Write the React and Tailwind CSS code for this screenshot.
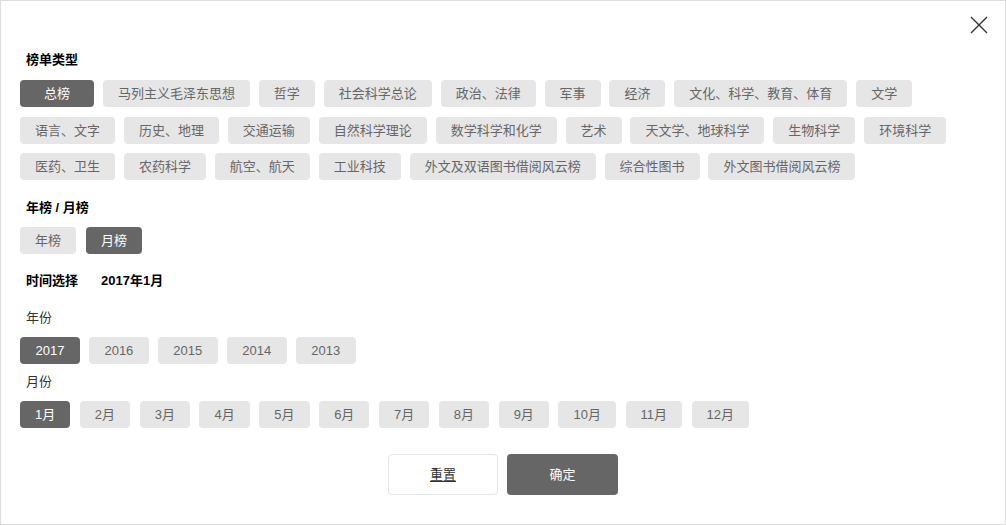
import React, { useState } from 'react';

const FONT = { fontFamily: '"Liberation Sans", "Noto Sans CJK SC", sans-serif' };

const categories = [
  '总榜', '马列主义毛泽东思想', '哲学', '社会科学总论', '政治、法律', '军事', '经济',
  '文化、科学、教育、体育', '文学', '语言、文字', '历史、地理', '交通运输', '自然科学理论',
  '数学科学和化学', '艺术', '天文学、地球科学', '生物科学', '环境科学', '医药、卫生',
  '农药科学', '航空、航天', '工业科技', '外文及双语图书借阅风云榜', '综合性图书', '外文图书借阅风云榜',
];
const years = ['2017', '2016', '2015', '2014', '2013'];
const months = ['1月', '2月', '3月', '4月', '5月', '6月', '7月', '8月', '9月', '10月', '11月', '12月'];

const Chip = ({ label, active, pad = 'px-[15px]', onClick }) => (
  <button
    onClick={onClick}
    className={`h-[27px] leading-[27px] rounded-[4px] text-[13px] whitespace-nowrap ${pad} ${
      active ? 'bg-[#666666] text-white' : 'bg-[#e6e6e6] text-[#666666]'
    }`}
  >
    {label}
  </button>
);

const Heading = ({ children, className = '' }) => (
  <div className={`ml-[6px] h-[20px] leading-[20px] text-[13px] font-bold text-black ${className}`}>{children}</div>
);

export default function App() {
  const [cat, setCat] = useState('总榜');
  const [mode, setMode] = useState('月榜');
  const [year, setYear] = useState('2017');
  const [month, setMonth] = useState('1月');

  return (
    <div style={FONT} className="relative w-[1006px] h-[525px] bg-white border border-[#dddddd] px-[19px] pt-[49px] text-[#333333]">
      {/* close */}
      <button className="absolute right-[16px] top-[14px] w-[20px] h-[20px]">
        <svg viewBox="0 0 20 20" className="w-[20px] h-[20px]">
          <path d="M2 2 L18 18 M18 2 L2 18" stroke="#333333" strokeWidth="1.4" fill="none" />
        </svg>
      </button>

      <Heading>榜单类型</Heading>
      <div className="mt-[10px] flex flex-wrap gap-x-[8.9px] gap-y-[9.5px] w-[940px]">
        {categories.map(c => (
          <Chip
            key={c}
            label={c}
            active={cat === c}
            pad={c === '总榜' ? 'px-[24px]' : 'px-[15px]'}
            onClick={() => setCat(c)}
          />
        ))}
      </div>

      <Heading className="mt-[18px]">年榜 / 月榜</Heading>
      <div className="mt-[9px] flex gap-[10px]">
        {['年榜', '月榜'].map(m => (
          <Chip key={m} label={m} active={mode === m} onClick={() => setMode(m)} />
        ))}
      </div>

      <Heading className="mt-[17px] flex gap-[23px]">
        <span>时间选择</span>
        <span>{year}年{month}</span>
      </Heading>

      <div className="ml-[6px] mt-[17px] h-[20px] leading-[20px] text-[13px] text-[#333333]">年份</div>
      <div className="mt-[9px] flex gap-[9px]">
        {years.map(y => (
          <Chip key={y} label={y} pad="px-[15.5px]" active={year === y} onClick={() => setYear(y)} />
        ))}
      </div>

      <div className="ml-[6px] mt-[8px] h-[20px] leading-[20px] text-[13px] text-[#333333]">月份</div>
      <div className="mt-[9px] flex gap-[9.6px]">
        {months.map(m => (
          <Chip key={m} label={m} pad="px-[15px]" active={month === m} onClick={() => setMonth(m)} />
        ))}
      </div>

      <div className="mt-[26px] flex justify-center gap-[9px]">
        <button className="w-[110px] h-[41px] rounded-[4px] border border-[#e5e5e5] bg-white text-[13px] text-[#333333] underline underline-offset-2">
          重置
        </button>
        <button className="w-[111px] h-[41px] rounded-[4px] bg-[#666666] text-[13px] text-white">确定</button>
      </div>
    </div>
  );
}
